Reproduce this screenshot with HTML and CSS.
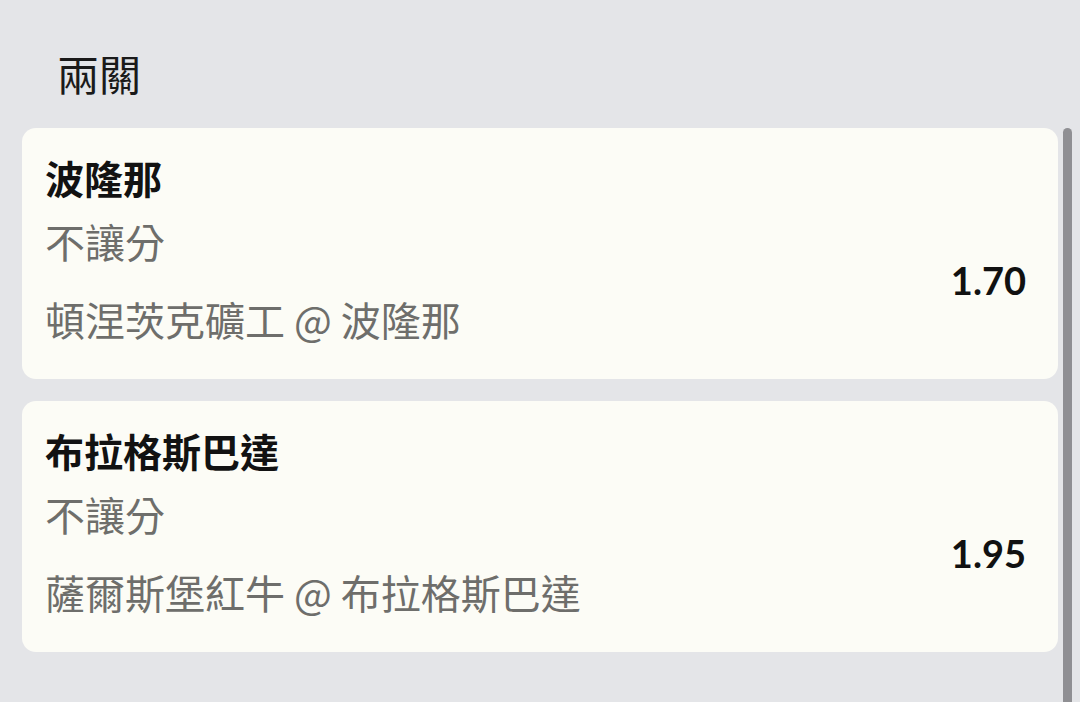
FILE: index.html
```html
<!DOCTYPE html>
<html lang="zh-Hant">
<head>
<meta charset="utf-8">
<link rel="stylesheet" href="styles.css">
</head>
<body>
<div class="page">
  <h1 class="title">兩關</h1>
  <div class="list">
    <div class="card">
      <div class="name">波隆那</div>
      <div class="row">
        <div class="info">
          <div class="market">不讓分</div>
          <div class="match">頓涅茨克礦工 @ 波隆那</div>
        </div>
        <div class="odds">1.70</div>
      </div>
    </div>
    <div class="card">
      <div class="name">布拉格斯巴達</div>
      <div class="row">
        <div class="info">
          <div class="market">不讓分</div>
          <div class="match">薩爾斯堡紅牛 @ 布拉格斯巴達</div>
        </div>
        <div class="odds">1.95</div>
      </div>
    </div>
  </div>
  <div class="scrollbar"></div>
</div>
</body>
</html>
```

FILE: styles.css
```css
html, body {
  margin: 0;
  padding: 0;
  background: #e4e5e8;
}
body {
  font-family: "Noto Sans CJK TC", "Noto Sans", sans-serif;
  width: 1080px;
  height: 702px;
  overflow: hidden;
}
.page {
  position: relative;
  height: 702px;
  padding-top: 49px;
  box-sizing: border-box;
}
.title {
  margin: 0 0 31px 57px;
  font-size: 42px;
  line-height: 48px;
  font-weight: 400;
  color: #1a1a1a;
}
.list {
  display: flex;
  flex-direction: column;
  gap: 22px;
  margin: 0 22px;
}
.card {
  background: #fcfcf6;
  border-radius: 14px;
  height: 251px;
  box-sizing: border-box;
  padding: 25px 32px 0 23px;
}
.name {
  font-size: 39px;
  line-height: 48px;
  font-weight: 700;
  color: #121212;
}
.row {
  display: flex;
  align-items: center;
  justify-content: space-between;
  margin-top: 16px;
}
.info {
  display: flex;
  flex-direction: column;
  gap: 30px;
}
.market, .match {
  font-size: 40px;
  line-height: 48px;
  color: #6e6e6b;
}
.odds {
  font-family: Lato, "Liberation Sans", sans-serif;
  font-weight: 700;
  font-size: 38px;
  color: #111;
}
.scrollbar {
  position: absolute;
  top: 128px;
  right: 8px;
  width: 9px;
  bottom: 0;
  background: #8f8f93;
  border-radius: 5px 5px 0 0;
}
```
